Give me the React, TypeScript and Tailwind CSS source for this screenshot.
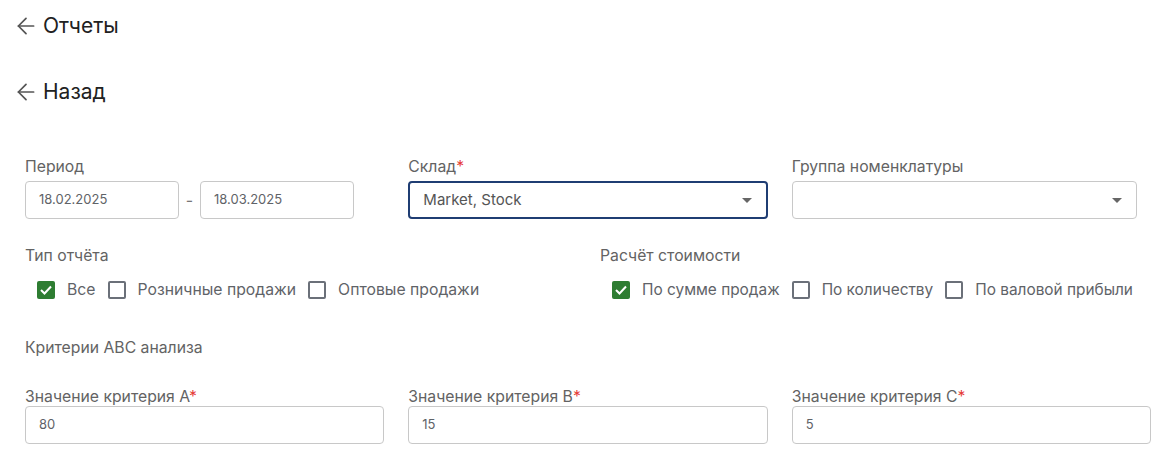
import { ArrowLeft } from "lucide-react";

const font = { fontFamily: "Inter, 'Noto Sans', sans-serif" };

function BackLink({ label }: { label: string }) {
  return (
    <div className="flex h-[34px] items-center gap-[4px] pl-[13px] text-[21px] text-[#212121]">
      <ArrowLeft className="h-[26px] w-[26px] text-[#555]" strokeWidth={1.6} />
      <span>{label}</span>
    </div>
  );
}

function Label({ text, required, tight }: { text: string; required?: boolean; tight?: boolean }) {
  return (
    <div className={`h-[17px] text-[15.75px] leading-[17px] text-[#636363] ${tight ? "mb-[1px]" : "mb-[6px]"}`}>
      {text}
      {required && <span className="text-[#e53935]">*</span>}
    </div>
  );
}

function Caret() {
  return (
    <svg width="10" height="5" viewBox="0 0 10 5" className="text-[#666]">
      <path d="M0 0h10L5 5z" fill="currentColor" />
    </svg>
  );
}

function Check({ label, checked, compact }: { label: string; checked?: boolean; compact?: boolean }) {
  return (
    <label className={`flex items-center gap-[12px] text-[#5f6368] ${compact ? "text-[15.4px]" : "text-[15.75px]"}`}>
      {checked ? (
        <span className="flex h-[18px] w-[18px] items-center justify-center rounded-[2px] bg-[#2e7d32]">
          <svg width="12" height="10" viewBox="0 0 12 10">
            <path d="M1 5l3.5 3.5L11 1.5" fill="none" stroke="white" strokeWidth="2" />
          </svg>
        </span>
      ) : (
        <span className="h-[18px] w-[18px] rounded-[2px] border-2 border-[#6b7079]" />
      )}
      <span>{label}</span>
    </label>
  );
}

function TextInput({ value }: { value: string }) {
  return (
    <div className="flex h-[38px] items-center rounded-[4px] border border-[#c8c8c8] px-[13px] text-[13px] text-[#5f6368]">
      {value}
    </div>
  );
}

export default function App() {
  return (
    <div className="min-h-[462px] bg-white pt-[9px]" style={font}>
      <BackLink label="Отчеты" />
      <div className="h-[32px]" />
      <BackLink label="Назад" />

      <div className="w-[1151px] pl-[25px] pt-[49px]">
        <div className="grid grid-cols-3 gap-x-[24px]">
          <div>
            <Label text="Период" />
            <div className="flex items-center">
              <div className="w-[154px]">
                <TextInput value="18.02.2025" />
              </div>
              <span className="w-[21px] text-center text-[#777]">-</span>
              <div className="w-[154px]">
                <TextInput value="18.03.2025" />
              </div>
            </div>
          </div>
          <div>
            <Label text="Склад" required />
            <div className="flex h-[38px] items-center justify-between rounded-[4px] border-2 border-[#1f3d73] pl-[13px] pr-[14px] text-[15px] text-[#555]">
              <span>Market, Stock</span>
              <Caret />
            </div>
          </div>
          <div>
            <Label text="Группа номенклатуры" />
            <div className="flex h-[38px] w-[345px] items-center justify-end rounded-[4px] border border-[#c8c8c8] pr-[14px]">
              <Caret />
            </div>
          </div>
        </div>

        <div className="mt-[28px] grid grid-cols-2 gap-x-[24px]">
          <div>
            <Label text="Тип отчёта" />
            <div className="flex items-center gap-[12px] pl-[12px] pt-[8px]">
              <Check label="Все" checked />
              <Check label="Розничные продажи" />
              <Check label="Оптовые продажи" />
            </div>
          </div>
          <div>
            <Label text="Расчёт стоимости" />
            <div className="flex items-center gap-[12px] pl-[12px] pt-[8px]">
              <Check label="По сумме продаж" checked compact />
              <Check label="По количеству" compact />
              <Check label="По валовой прибыли" compact />
            </div>
          </div>
        </div>

        <div className="mt-[37px] text-[15.75px] leading-[17px] text-[#636363]">Критерии ABC анализа</div>

        <div className="mt-[32px] grid grid-cols-3 gap-x-[24px]">
          <div>
            <Label text="Значение критерия A" required tight />
            <TextInput value="80" />
          </div>
          <div>
            <Label text="Значение критерия B" required tight />
            <TextInput value="15" />
          </div>
          <div>
            <Label text="Значение критерия C" required tight />
            <TextInput value="5" />
          </div>
        </div>
      </div>
    </div>
  );
}
